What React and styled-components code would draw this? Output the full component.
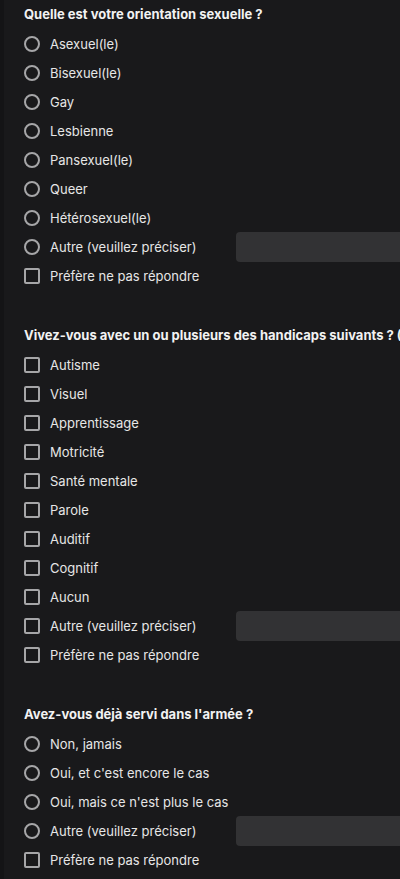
import React from "react";
import styled, { createGlobalStyle } from "styled-components";

const Global = createGlobalStyle`
  html, body { margin: 0; padding: 0; background: #19191b; overflow-x: hidden; }
  body { font-family: Inter, "Noto Sans", "Liberation Sans", sans-serif; }
`;

const Page = styled.main`
  border-left: 4px solid #141416;
  padding: 4px 0 20px 20px;
  min-height: 879px;
  box-sizing: border-box;
  display: flex;
  flex-direction: column;
  gap: 35px;
  overflow: hidden;
`;

const Section = styled.section`
  display: flex;
  flex-direction: column;
`;

const Heading = styled.h2`
  margin: 0 0 5px 0;
  font-size: 13px;
  line-height: 20px;
  font-weight: 700;
  color: #f2f2f2;
  white-space: nowrap;
`;

const Row = styled.label`
  display: flex;
  align-items: center;
  height: 29px;
  white-space: nowrap;
`;

const Control = styled.span`
  width: 16px;
  height: 16px;
  box-sizing: border-box;
  border: 2px solid #a6a6a8;
  border-radius: ${(p) => (p.$round ? "50%" : "2px")};
  flex: 0 0 auto;
`;

const Label = styled.span`
  margin-left: 10px;
  font-size: 13px;
  color: #e6e6e6;
  width: ${(p) => (p.$withInput ? "186px" : "auto")};
  flex: 0 0 auto;
`;

const TextBox = styled.span`
  display: block;
  height: 30px;
  width: 220px;
  flex: 0 0 auto;
  background: #323234;
  border-radius: 4px;
`;

const sections = [
  {
    title: "Quelle est votre orientation sexuelle ?",
    items: [
      ["Asexuel(le)", "r"],
      ["Bisexuel(le)", "r"],
      ["Gay", "r"],
      ["Lesbienne", "r"],
      ["Pansexuel(le)", "r"],
      ["Queer", "r"],
      ["Hétérosexuel(le)", "r"],
      ["Autre (veuillez préciser)", "r", true],
      ["Préfère ne pas répondre", "c"],
    ],
  },
  {
    title: "Vivez-vous avec un ou plusieurs des handicaps suivants ? (Cochez toutes les réponses applicables)",
    items: [
      ["Autisme", "c"],
      ["Visuel", "c"],
      ["Apprentissage", "c"],
      ["Motricité", "c"],
      ["Santé mentale", "c"],
      ["Parole", "c"],
      ["Auditif", "c"],
      ["Cognitif", "c"],
      ["Aucun", "c"],
      ["Autre (veuillez préciser)", "c", true],
      ["Préfère ne pas répondre", "c"],
    ],
  },
  {
    title: "Avez-vous déjà servi dans l'armée ?",
    items: [
      ["Non, jamais", "r"],
      ["Oui, et c'est encore le cas", "r"],
      ["Oui, mais ce n'est plus le cas", "r"],
      ["Autre (veuillez préciser)", "r", true],
      ["Préfère ne pas répondre", "c"],
    ],
  },
];

export default function App() {
  return (
    <>
      <Global />
      <Page>
        {sections.map((s) => (
          <Section key={s.title}>
            <Heading>{s.title}</Heading>
            {s.items.map(([text, kind, input]) => (
              <Row key={text}>
                <Control $round={kind === "r"} />
                <Label $withInput={!!input}>{text}</Label>
                {input && <TextBox />}
              </Row>
            ))}
          </Section>
        ))}
      </Page>
    </>
  );
}
